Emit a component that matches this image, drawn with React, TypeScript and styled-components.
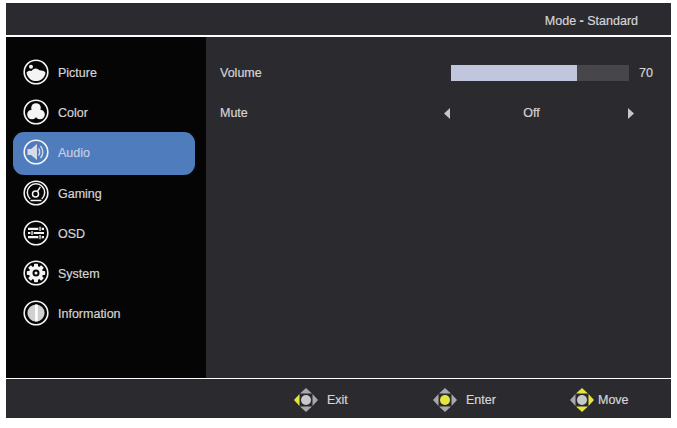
import React from "react";
import styled, { createGlobalStyle } from "styled-components";

const GlobalStyle = createGlobalStyle`
  html, body {
    margin: 0;
    background: #fff;
  }
  body {
    font-family: "Liberation Sans", Arial, sans-serif;
  }
`;

const ICON_STROKE = "#f4f4f4";

function Ring({ children }: { children: React.ReactNode }) {
  return (
    <svg width="28" height="28" viewBox="0 0 28 28">
      <circle cx="14" cy="14" r="11.8" fill="none" stroke={ICON_STROKE} strokeWidth="1.6" />
      {children}
    </svg>
  );
}

const PictureIcon = () => (
  <Ring>
    <path
      d="M4.500 14.500c1.500-1.800 3.300-2.300 5-1.500 1.500-2.600 4.500-3.300 6.500-1.700 1 .8 2 1.200 3.200 1.200 1.800 0 3.400.8 4.300 2.200-.6 4.800-4.500 8.400-9.500 8.400s-9-3.800-9.500-8.600z"
      fill={ICON_STROKE}
    />
    <circle cx="9" cy="8.800" r="2" fill={ICON_STROKE} />
  </Ring>
);

const ColorIcon = () => (
  <Ring>
    <circle cx="14" cy="10" r="4.800" fill={ICON_STROKE} />
    <circle cx="10" cy="16.500" r="4.800" fill={ICON_STROKE} />
    <circle cx="18" cy="16.500" r="4.800" fill={ICON_STROKE} />
  </Ring>
);

const AudioIcon = () => (
  <Ring>
    <path d="M5.500 11h3.500l6-5v16l-6-5H5.500z" fill="#d6dbe8" />
    <path d="M16.500 10.500c1.600 1.800 1.600 5.200 0 7M18.500 8c3 3.200 3 8.800 0 12" fill="none" stroke="#d6dbe8" strokeWidth="1.400" />
  </Ring>
);

const GamingIcon = () => (
  <Ring>
    <path d="M8.200 20a8.700 8.700 0 1 1 11.600 0" fill="none" stroke={ICON_STROKE} strokeWidth="1.500" />
    <path d="M8.500 21.500h11" stroke={ICON_STROKE} strokeWidth="1.500" />
    <circle cx="13.500" cy="15" r="3" fill="none" stroke={ICON_STROKE} strokeWidth="1.500" />
    <path d="M15.300 12.600l3-4.600" stroke={ICON_STROKE} strokeWidth="1.500" />
  </Ring>
);

const OsdIcon = () => (
  <Ring>
    <path d="M6 8.800h16v2.200H6zM6 12.900h16v2.200H6zM6 17h16v2.200H6z" fill={ICON_STROKE} />
    <path d="M17.400 7.800h1.300v1.200h-1.300zM17.400 11h1.300v1h-1.300zM9.400 11.900h1.300v1h-1.300zM9.400 15.100h1.300v1h-1.300zM17.400 16h1.300v1h-1.300zM17.400 19.200h1.300v1h-1.300z" fill={ICON_STROKE} />
    <path d="M16.400 8.800h1v2.200h-1zM18.700 8.800h1v2.200h-1zM8.400 12.900h1v2.200h-1zM10.700 12.900h1v2.200h-1zM16.400 17h1v2.200h-1zM18.700 17h1v2.200h-1z" fill="#050505" />
  </Ring>
);

const SystemIcon = () => (
  <Ring>
    <g fill={ICON_STROKE}>
      {[0, 45, 90, 135].map((angle) => (
        <rect key={angle} x="12" y="4.800" width="4" height="18.400" rx="0.800" transform={`rotate(${angle} 14 14)`} />
      ))}
      <circle cx="14" cy="14" r="7" />
    </g>
    <circle cx="14" cy="14" r="3.500" fill="#050505" />
    <circle cx="14" cy="14" r="1.500" fill={ICON_STROKE} />
  </Ring>
);

const InfoIcon = () => (
  <Ring>
    <circle cx="14" cy="14" r="8.600" fill="#d0d0d0" />
    <rect x="13" y="5.500" width="2.800" height="17" fill="#fafafa" />
  </Ring>
);

const menu = [
  { label: "Picture", icon: <PictureIcon /> },
  { label: "Color", icon: <ColorIcon /> },
  { label: "Audio", icon: <AudioIcon />, active: true },
  { label: "Gaming", icon: <GamingIcon /> },
  { label: "OSD", icon: <OsdIcon /> },
  { label: "System", icon: <SystemIcon /> },
  { label: "Information", icon: <InfoIcon /> },
];

type PadKind = "exit" | "enter" | "move";

function PadIcon({ kind }: { kind: PadKind }) {
  const on = "#e4e63c";
  const off = "#a9a9ab";
  return (
    <svg width="26" height="26" viewBox="0 0 26 26">
      <path d="M13 1l6 5.500H7z" fill={kind === "move" ? on : off} />
      <path d="M13 25l6-5.500H7z" fill={kind === "move" ? on : off} />
      <path d="M1 13l5.500-6v12z" fill={kind === "exit" ? on : off} />
      <path d="M25 13l-5.500-6v12z" fill={kind === "move" ? on : off} />
      <circle cx="13" cy="13" r="5" fill={kind === "enter" ? on : "#c9c9cb"} />
    </svg>
  );
}

const Triangle = ({ dir }: { dir: "left" | "right" }) => (
  <svg width="6" height="11" viewBox="0 0 6 11">
    <path d={dir === "left" ? "M6 0v11L0 5.500z" : "M0 0v11l6-5.500z"} fill="#c6c6c8" />
  </svg>
);

export default function App() {
  return (
    <>
      <GlobalStyle />
      <Osd>
        <Header>
          Mode <Dash>-</Dash> Standard
        </Header>
        <Body>
          <Sidebar>
            {menu.map((item) => (
              <MenuItem key={item.label} $active={item.active}>
                {item.icon}
                <MenuLabel $active={item.active}>{item.label}</MenuLabel>
              </MenuItem>
            ))}
          </Sidebar>
          <Content>
            <Row>
              <RowLabel>Volume</RowLabel>
              <Track>
                <Fill style={{ width: `${(126 / 178) * 100}%` }} />
              </Track>
              <Value>70</Value>
            </Row>
            <Row>
              <RowLabel>Mute</RowLabel>
              <Selector>
                <Triangle dir="left" />
                <OffLabel>Off</OffLabel>
                <Triangle dir="right" />
              </Selector>
            </Row>
          </Content>
        </Body>
        <Footer>
          <Hint $width="139px">
            <PadIcon kind="exit" />
            <HintLabel $gap="8px">Exit</HintLabel>
          </Hint>
          <Hint $width="137px">
            <PadIcon kind="enter" />
            <HintLabel $gap="8px">Enter</HintLabel>
          </Hint>
          <Hint $width="auto">
            <PadIcon kind="move" />
            <HintLabel $gap="3px">Move</HintLabel>
          </Hint>
        </Footer>
      </Osd>
    </>
  );
}

const Osd = styled.div`
  width: 665px;
  height: 415px;
  margin: 3px 0 0 6px;
  display: flex;
  flex-direction: column;
  background: #2b2b2f;
  color: #d4d4d6;
  font-size: 12.500px;
  -webkit-text-stroke: 0.2px currentColor;
`;

const Header = styled.div`
  height: 32px;
  flex: none;
  display: flex;
  align-items: center;
  justify-content: flex-end;
  gap: 3.500px;
  padding: 4px 33px 0 0;
  box-sizing: border-box;
`;

const Dash = styled.span`
  font-weight: bold;
`;

const Body = styled.div`
  height: 344px;
  flex: none;
  display: flex;
  box-sizing: border-box;
  border-top: 2px solid #fff;
  border-bottom: 1px solid #fff;
`;

const Sidebar = styled.nav`
  width: 200px;
  flex: none;
  box-sizing: border-box;
  padding: 15px 11px 0 7px;
  background: #050505;
  display: flex;
  flex-direction: column;
`;

const MenuItem = styled.div<{ $active?: boolean }>`
  height: 40px;
  flex: none;
  display: flex;
  align-items: center;
  gap: 8px;
  padding: 0 0 ${(p) => (p.$active ? "3px" : "0")} 9px;
  margin-bottom: ${(p) => (p.$active ? "-2px" : "0")};
  border-radius: 11px;
  background: ${(p) => (p.$active ? "#4f7cbd" : "transparent")};
`;

const MenuLabel = styled.span<{ $active?: boolean }>`
  padding-top: 1px;
  color: ${(p) => (p.$active ? "#c5cfe6" : "#d4d4d6")};
`;

const Content = styled.main`
  flex: 1;
  padding: 16px 18px 0 14px;
  display: flex;
  flex-direction: column;
`;

const Row = styled.div`
  height: 40px;
  display: flex;
  align-items: center;
`;

const RowLabel = styled.span`
  width: 231px;
  flex: none;
`;

const Track = styled.div`
  width: 178px;
  height: 16px;
  flex: none;
  background: #47474b;
`;

const Fill = styled.div`
  height: 100%;
  background: #c2c6dc;
`;

const Value = styled.span`
  margin-left: 10px;
`;

const Selector = styled.div`
  width: 192px;
  margin-left: -7px;
  display: flex;
  align-items: center;
  justify-content: space-between;
  padding: 0 2px 0 0;
  box-sizing: border-box;
`;

const OffLabel = styled.span`
  margin-right: 15px;
`;

const Footer = styled.footer`
  flex: 1;
  display: flex;
  align-items: center;
  padding: 2px 0 0 287px;
`;

const Hint = styled.div<{ $width: string }>`
  width: ${(p) => p.$width};
  display: flex;
  align-items: center;
`;

const HintLabel = styled.span<{ $gap: string }>`
  margin-left: ${(p) => p.$gap};
`;
